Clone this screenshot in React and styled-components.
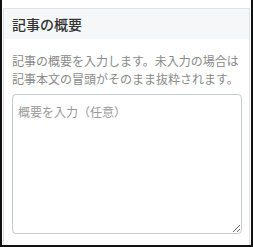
import React from "react";
import styled, { createGlobalStyle } from "styled-components";

const Global = createGlobalStyle`
  html, body { margin: 0; padding: 0; background: #fff; }
  * { box-sizing: border-box; }
`;

const Frame = styled.div`
  width: 253px;
  height: 247px;
  border-left: 2px solid #111;
  border-right: 2px solid #111;
  border-bottom: 2px solid #111;
  padding: 8px 1px 0 1px;
  display: flex;
  flex-direction: column;
  font-family: "Noto Sans CJK JP", "Noto Sans", sans-serif;
`;

const Card = styled.section`
  flex: 1;
  border: 1px solid #dfe3e6;
  border-bottom: none;
  display: flex;
  flex-direction: column;
`;

const Header = styled.h3`
  margin: 0;
  height: 30px;
  padding: 0 8px;
  display: flex;
  align-items: center;
  background: #f6f7f9;
  font-size: 14px;
  font-weight: 500;
  color: #333;
`;

const Body = styled.div`
  padding: 13px 8px 10px 8px;
  display: flex;
  flex-direction: column;
  gap: 6px;
  flex: 1;
`;

const Help = styled.p`
  margin: 0;
  font-size: 12px;
  line-height: 18px;
  color: #8a8a8a;
`;

const Area = styled.textarea`
  width: 230px;
  height: 140px;
  border: 1px solid #c6ccd0;
  border-radius: 4px;
  padding: 8px 5px;
  font-family: inherit;
  font-size: 12px;
  line-height: 18px;
  color: #333;
  resize: vertical;
  outline: none;
  &::placeholder { color: #9a9a9a; }
`;

export default function App() {
  return (
    <>
      <Global />
      <Frame>
        <Card>
          <Header>記事の概要</Header>
          <Body>
            <Help>記事の概要を入力します。未入力の場合は記事本文の冒頭がそのまま抜粋されます。</Help>
            <Area placeholder="概要を入力（任意）" />
          </Body>
        </Card>
      </Frame>
    </>
  );
}
